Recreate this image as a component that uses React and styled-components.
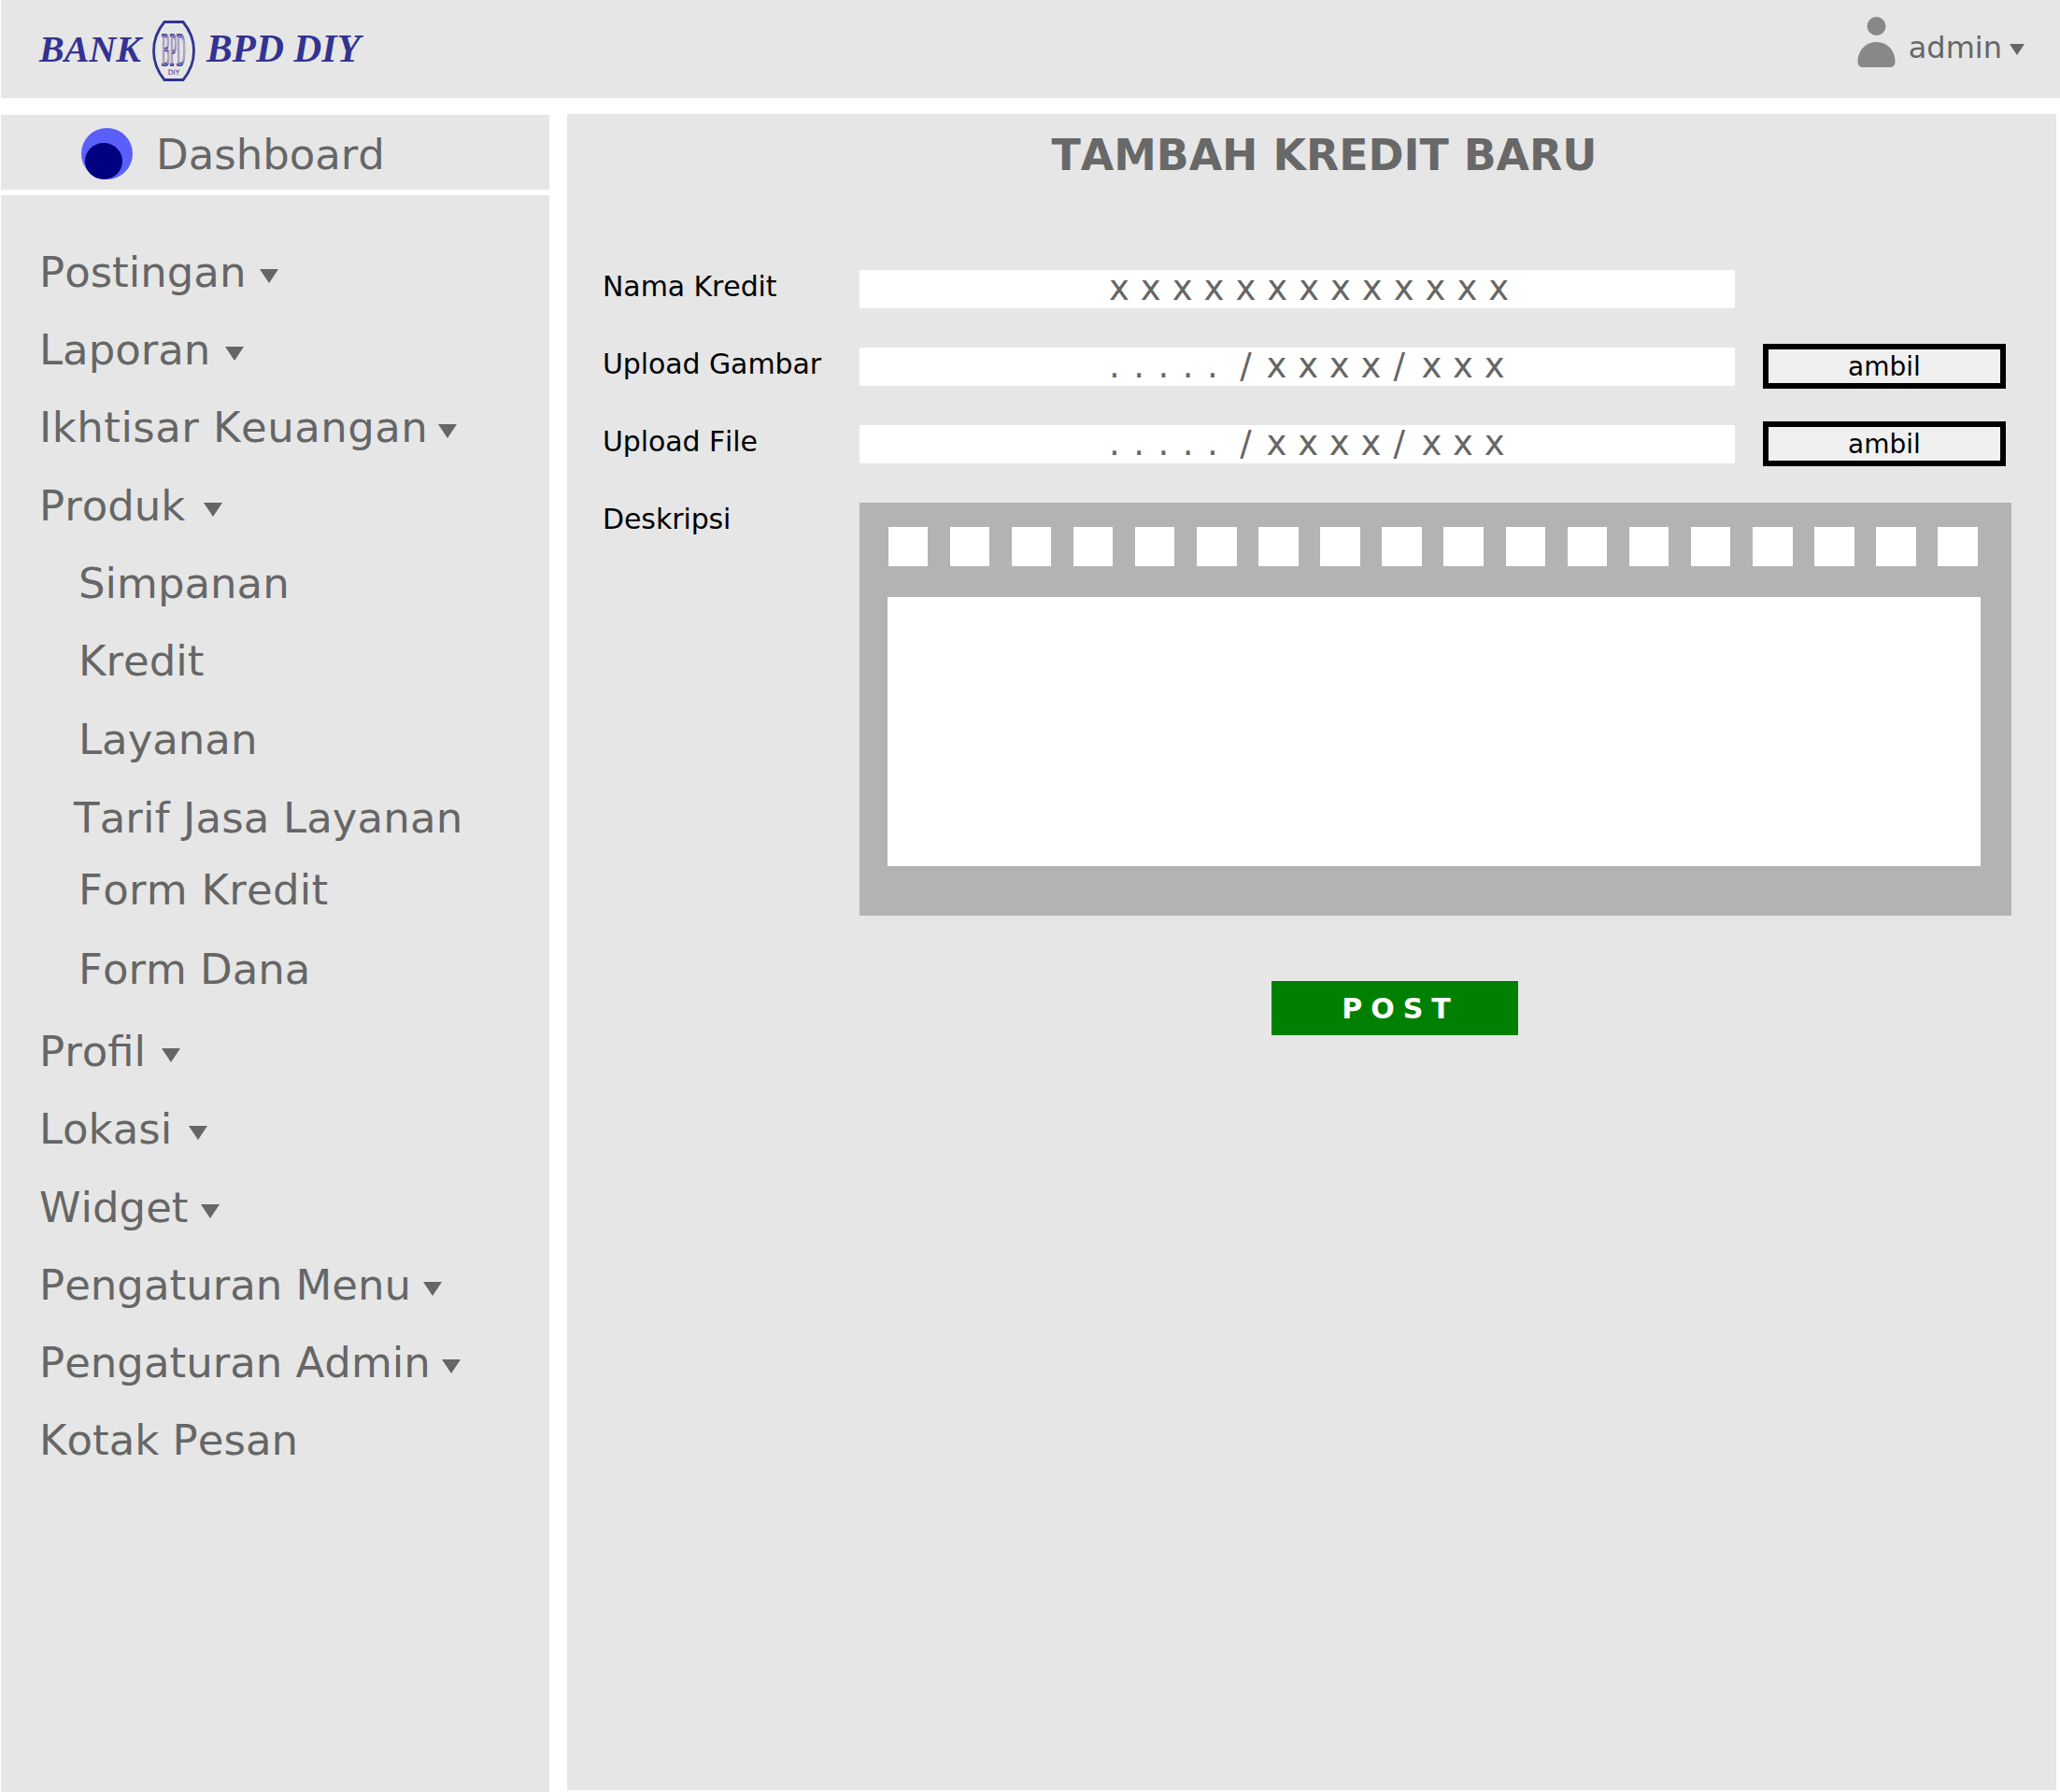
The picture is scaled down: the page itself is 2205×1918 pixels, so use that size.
import React from 'react'
import styled, { createGlobalStyle } from 'styled-components'

const Global = createGlobalStyle`
  html, body { margin: 0; padding: 0; background: #fff; }
  body { font-family: "DejaVu Sans", sans-serif; font-kerning: none; }
`

const Page = styled.div`
  width: 2205px;
  height: 1918px;
  overflow: hidden;
  padding-left: 1px;
  box-sizing: border-box;
  display: flex;
  flex-direction: column;
`

const Header = styled.header`
  height: 105px;
  flex: none;
  background: #e6e6e6;
  display: flex;
  align-items: center;
  justify-content: space-between;
  padding: 0 38px 0 41px;
`

const Logo = styled.div`
  display: flex;
  align-items: center;
  gap: 12px;
  padding-bottom: 1px;
`

const MarkWrap = styled.span`
  display: flex;
  margin-top: 5px;
`

const LogoText = styled.span`
  font-family: "Liberation Serif", serif;
  font-weight: 700;
  font-style: italic;
  font-kerning: normal;
  font-size: ${p => p.$size}px;
  color: #333391;
`

const User = styled.div`
  display: flex;
  align-items: center;
  color: #666;
  font-size: 32px;
`

const PersonWrap = styled.span`
  display: flex;
  margin-bottom: 15px;
`

const UserName = styled.span`
  margin: 0 0 3px 14px;
`

const Caret = styled.span`
  flex: none;
  width: 0;
  height: 0;
  border-left: ${p => p.$w / 2}px solid transparent;
  border-right: ${p => p.$w / 2}px solid transparent;
  border-top: ${p => p.$h}px solid #666;
  margin-left: ${p => p.$gap}px;
  margin-top: ${p => p.$top}px;
`

const Body = styled.div`
  flex: 1;
  display: flex;
  gap: 19px;
  padding-top: 17px;
  min-height: 0;
`

const Side = styled.aside`
  width: 587px;
  flex: none;
  display: flex;
  flex-direction: column;
  gap: 6px;
  margin-top: 1px;
`

const DashRow = styled.div`
  height: 80px;
  flex: none;
  box-sizing: border-box;
  padding: 3px 0 0 86px;
  background: #e6e6e6;
  display: flex;
  align-items: center;
  gap: 25px;
  font-size: 45px;
  color: #666;
`

const DashLabel = styled.span`
  padding-top: 1px;
`

const DashIcon = styled.span`
  position: relative;
  width: 55px;
  height: 55px;
  border-radius: 50%;
  background: #5b5ffa;
  flex: none;
`

const DashDot = styled.span`
  position: absolute;
  left: 4px;
  bottom: 0;
  width: 40px;
  height: 39px;
  border-radius: 50%;
  background: #000080;
`

const Menu = styled.nav`
  flex: 1;
  background: #e6e6e6;
  padding: 41px 0 0 41px;
`

const MenuItem = styled.div`
  height: ${p => p.$h || 83.2}px;
  display: flex;
  align-items: center;
  padding-left: ${p => p.$indent || 0}px;
  font-size: 45px;
  letter-spacing: ${p => p.$ls || 0}px;
  color: #666;
  white-space: nowrap;
`

const Main = styled.main`
  width: 1594px;
  flex: none;
  height: 1794px;
  background: #e6e6e6;
`

const Title = styled.h1`
  margin: 0 0 80.7px;
  box-sizing: border-box;
  padding: 2px 0 0 27px;
  height: 86px;
  line-height: 84px;
  text-align: center;
  font-size: 45.8px;
  font-weight: 700;
  color: #686868;
`

const Form = styled.div`
  display: flex;
  flex-direction: column;
  gap: 41.9px;
  padding-left: 38px;
`

const Row = styled.div`
  display: grid;
  grid-template-columns: 275px 937px 30px 260px;
  grid-template-rows: 41.2px;
`

const EditorRow = styled.div`
  display: flex;
`

const Label = styled.label`
  width: ${p => p.$w || 'auto'};
  flex: none;
  align-self: start;
  font-size: 30px;
  line-height: 36px;
  letter-spacing: -0.1px;
  color: #000;
  white-space: nowrap;
`

const Field = styled.div`
  background: #fff;
  box-sizing: border-box;
  padding-left: 267px;
  font-size: 37px;
  line-height: 39px;
  letter-spacing: ${p => p.$ls || 0}px;
  color: #666;
  white-space: pre;
`

const Dots = styled.span`
  letter-spacing: 1.37px;
`

const Slash = styled.span`
  margin: 0 ${p => p.$right}px 0 ${p => p.$left}px;
`

const PickButton = styled.button`
  grid-column: 4;
  align-self: center;
  height: 48px;
  box-sizing: border-box;
  border: 6px solid #000;
  border-radius: 0;
  background: #f0f0f0;
  padding: 0;
  font-family: inherit;
  font-size: 28px;
  color: #000;
`

const Editor = styled.div`
  width: 1233px;
  height: 442px;
  box-sizing: border-box;
  background: #b3b3b3;
  padding: 26.5px 33px 53px 30px;
  display: flex;
  flex-direction: column;
  gap: 33.5px;
`

const Tools = styled.div`
  display: flex;
  justify-content: space-between;
  padding: 0 3px 0 0.5px;
`

const Tool = styled.span`
  width: 42.5px;
  height: 41.5px;
  background: #fff;
`

const Area = styled.div`
  flex: 1;
  background: #fff;
`

const Post = styled.button`
  display: block;
  width: 264px;
  height: 58px;
  margin: 70px 0 0 754px;
  border: 0;
  background: #008000;
  color: #fff;
  font-family: inherit;
  font-weight: 700;
  font-size: 30px;
  letter-spacing: 9px;
  padding: 2px 0 0 12px;
`

const BankMark = () => (
  <svg width="46" height="65" viewBox="0 0 46 65" fill="none">
    <path d="M13 1.5H33C40 10 44.5 20 44.5 32.5C44.5 45 40 55 33 63.5H13C6 55 1.5 45 1.5 32.5C1.5 20 6 10 13 1.5Z" stroke="#333391" strokeWidth="2.8" />
    <text transform="translate(10 48) scale(1 3.9)" fontFamily="Liberation Serif" fontSize="13" fill="none" stroke="#333391" strokeWidth="1.2" vectorEffect="non-scaling-stroke">BPD</text>
    <text x="23" y="58" textAnchor="middle" fontFamily="DejaVu Sans" fontSize="7.5" fill="#333391">DIY</text>
  </svg>
)

const PersonIcon = () => (
  <svg width="41" height="55" viewBox="0 0 41 55" fill="#888">
    <circle cx="20.5" cy="10" r="10" />
    <path d="M20.5 27C9 27 .5 36 .5 48C.5 52 3 54 6 54H35C38 54 40.5 52 40.5 48C40.5 36 32 27 20.5 27Z" />
  </svg>
)

const PathValue = () => (
  <Field>
    <Dots>{'. . . . . '}</Dots>
    <Slash $left={9} $right={4}>/</Slash>
    {' x x x x '}
    <Slash $left={1.4} $right={5.6}>/</Slash>
    {' x x x'}
  </Field>
)

const MENU = [
  { text: 'Postingan', gap: 15 },
  { text: 'Laporan', gap: 16 },
  { text: 'Ikhtisar Keuangan', gap: 11, ls: 0.47 },
  { text: 'Produk', gap: 20 },
  { text: 'Simpanan', indent: 42, h: 84 },
  { text: 'Kredit', indent: 42, h: 80.7 },
  { text: 'Layanan', indent: 42, h: 88.7 },
  { text: 'Tarif Jasa Layanan', indent: 37, h: 78, ls: 0.14 },
  { text: 'Form Kredit', indent: 42, h: 77.5, ls: 0.27 },
  { text: 'Form Dana', indent: 42, h: 92.5 },
  { text: 'Profil', gap: 17 },
  { text: 'Lokasi', gap: 18 },
  { text: 'Widget', gap: 14 },
  { text: 'Pengaturan Menu', gap: 13 },
  { text: 'Pengaturan Admin', gap: 12 },
  { text: 'Kotak Pesan' },
]

const App = () => {
  return (
    <Page>
      <Global />
      <Header>
        <Logo>
          <LogoText $size={40}>BANK</LogoText>
          <MarkWrap><BankMark /></MarkWrap>
          <LogoText $size={41.5}>BPD DIY</LogoText>
        </Logo>
        <User>
          <PersonWrap><PersonIcon /></PersonWrap>
          <UserName>admin</UserName>
          <Caret $w={16} $h={12} $gap={8} $top={1} />
        </User>
      </Header>
      <Body>
        <Side>
          <DashRow>
            <DashIcon><DashDot /></DashIcon>
            <DashLabel>Dashboard</DashLabel>
          </DashRow>
          <Menu>
            {MENU.map(m => (
              <MenuItem key={m.text} $indent={m.indent} $h={m.h} $ls={m.ls}>
                {m.text}
                {m.gap && <Caret $w={20} $h={15} $gap={m.gap} $top={8} />}
              </MenuItem>
            ))}
          </Menu>
        </Side>
        <Main>
          <Title>TAMBAH KREDIT BARU</Title>
          <Form>
            <Row>
              <Label>Nama Kredit</Label>
              <Field $ls={0.1}>x x x x x x x x x x x x x</Field>
            </Row>
            <Row>
              <Label>Upload Gambar</Label>
              <PathValue />
              <PickButton>ambil</PickButton>
            </Row>
            <Row>
              <Label>Upload File</Label>
              <PathValue />
              <PickButton>ambil</PickButton>
            </Row>
            <EditorRow>
              <Label $w="275px">Deskripsi</Label>
              <Editor>
                <Tools>
                  {Array.from({ length: 18 }, (_, i) => <Tool key={i} />)}
                </Tools>
                <Area />
              </Editor>
            </EditorRow>
          </Form>
          <Post>POST</Post>
        </Main>
      </Body>
    </Page>
  )
}

export default App
